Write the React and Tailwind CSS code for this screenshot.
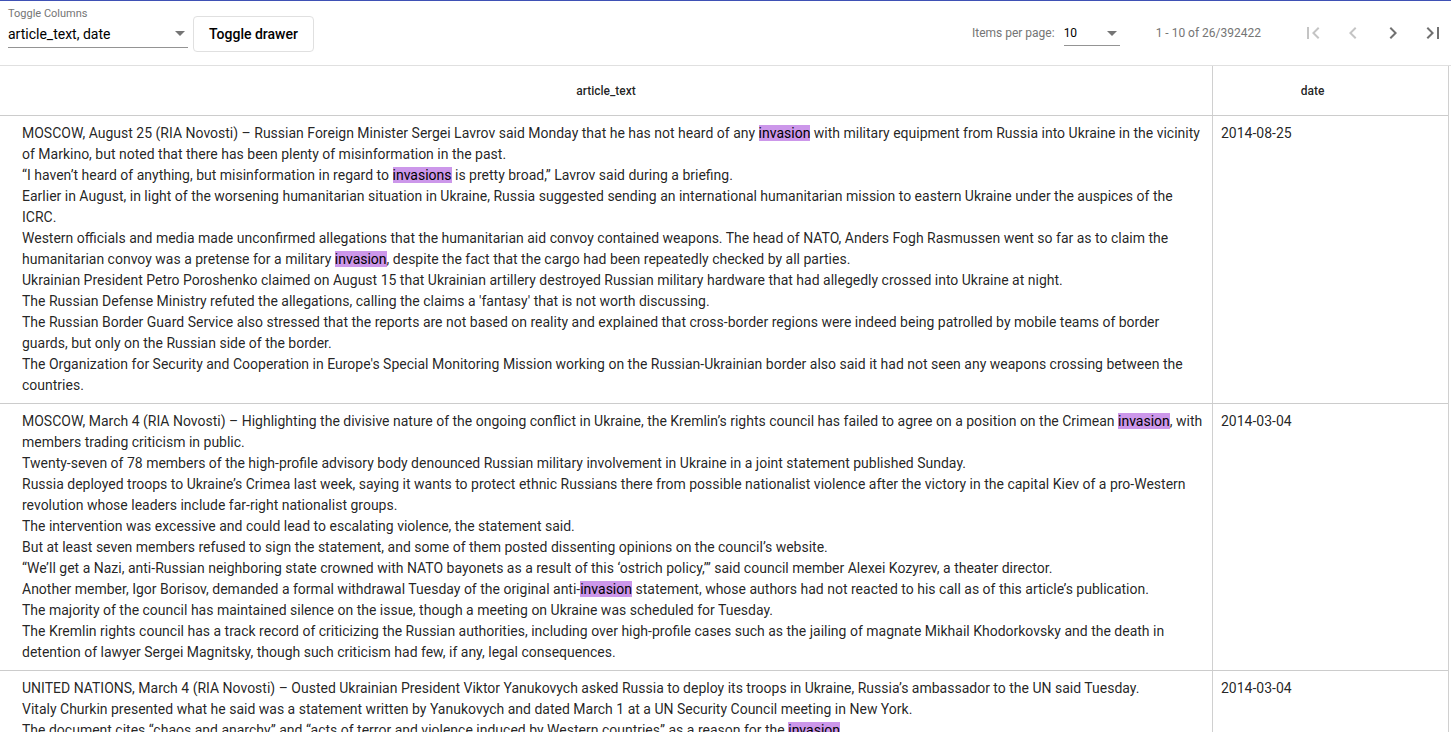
const rows = [
  {
    date: '2014-08-25',
    paras: [
      'MOSCOW, August 25 (RIA Novosti) – Russian Foreign Minister Sergei Lavrov said Monday that he has not heard of any [invasion] with military equipment from Russia into Ukraine in the vicinity of Markino, but noted that there has been plenty of misinformation in the past.',
      '“I haven’t heard of anything, but misinformation in regard to [invasions] is pretty broad,” Lavrov said during a briefing.',
      'Earlier in August, in light of the worsening humanitarian situation in Ukraine, Russia suggested sending an international humanitarian mission to eastern Ukraine under the auspices of the ICRC.',
      'Western officials and media made unconfirmed allegations that the humanitarian aid convoy contained weapons. The head of NATO, Anders Fogh Rasmussen went so far as to claim the humanitarian convoy was a pretense for a military [invasion], despite the fact that the cargo had been repeatedly checked by all parties.',
      'Ukrainian President Petro Poroshenko claimed on August 15 that Ukrainian artillery destroyed Russian military hardware that had allegedly crossed into Ukraine at night.',
      "The Russian Defense Ministry refuted the allegations, calling the claims a 'fantasy' that is not worth discussing.",
      'The Russian Border Guard Service also stressed that the reports are not based on reality and explained that cross-border regions were indeed being patrolled by mobile teams of border guards, but only on the Russian side of the border.',
      "The Organization for Security and Cooperation in Europe's Special Monitoring Mission working on the Russian-Ukrainian border also said it had not seen any weapons crossing between the countries.",
    ],
  },
  {
    date: '2014-03-04',
    paras: [
      'MOSCOW, March 4 (RIA Novosti) – Highlighting the divisive nature of the ongoing conflict in Ukraine, the Kremlin’s rights council has failed to agree on a position on the Crimean [invasion], with members trading criticism in public.',
      'Twenty-seven of 78 members of the high-profile advisory body denounced Russian military involvement in Ukraine in a joint statement published Sunday.',
      'Russia deployed troops to Ukraine’s Crimea last week, saying it wants to protect ethnic Russians there from possible nationalist violence after the victory in the capital Kiev of a pro-Western revolution whose leaders include far-right nationalist groups.',
      'The intervention was excessive and could lead to escalating violence, the statement said.',
      'But at least seven members refused to sign the statement, and some of them posted dissenting opinions on the council’s website.',
      '“We’ll get a Nazi, anti-Russian neighboring state crowned with NATO bayonets as a result of this ‘ostrich policy,’” said council member Alexei Kozyrev, a theater director.',
      'Another member, Igor Borisov, demanded a formal withdrawal Tuesday of the original anti-[invasion] statement, whose authors had not reacted to his call as of this article’s publication.',
      'The majority of the council has maintained silence on the issue, though a meeting on Ukraine was scheduled for Tuesday.',
      'The Kremlin rights council has a track record of criticizing the Russian authorities, including over high-profile cases such as the jailing of magnate Mikhail Khodorkovsky and the death in detention of lawyer Sergei Magnitsky, though such criticism had few, if any, legal consequences.',
    ],
  },
  {
    date: '2014-03-04',
    paras: [
      'UNITED NATIONS, March 4 (RIA Novosti) – Ousted Ukrainian President Viktor Yanukovych asked Russia to deploy its troops in Ukraine, Russia’s ambassador to the UN said Tuesday.',
      'Vitaly Churkin presented what he said was a statement written by Yanukovych and dated March 1 at a UN Security Council meeting in New York.',
      'The document cites “chaos and anarchy” and “acts of terror and violence induced by Western countries” as a reason for the [invasion].',
      'Churkin said the letter asked Russian President Vladimir Putin to use the armed forces to restore law and order in Ukraine.',
    ],
  },
];

// split "[word]" markers into highlighted spans
function Highlighted({ text }) {
  const parts = text.split(/(\[[^\]]+\])/);
  return parts.map((p, i) =>
    p.startsWith('[') ? (
      <mark key={i} className="bg-[#cc97ea] text-black">
        {p.slice(1, -1)}
      </mark>
    ) : (
      <span key={i}>{p}</span>
    )
  );
}

function Icon({ d, disabled }) {
  return (
    <button className="w-10 h-10 shrink-0 flex items-center justify-center">
      <svg
        viewBox="0 0 24 24"
        className={`w-6 h-6 ${disabled ? 'fill-[#c4c4c4]' : 'fill-[#717171]'}`}
      >
        <path d={d} />
      </svg>
    </button>
  );
}

export default function App() {
  return (
    <div className="h-screen flex flex-col overflow-hidden bg-white border-t border-[#3f51b5] font-['Roboto',sans-serif] text-[rgba(0,0,0,0.87)]">
      <div className="h-[65px] flex items-start border-b border-[#e0e0e0] shrink-0">
        <div className="ml-2 mt-[6px] w-[180px] flex flex-col">
          <span className="text-[11px] leading-[13px] text-[#757575]">Toggle Columns</span>
          <div className="h-[28px] flex items-center justify-between border-b border-[#949494]">
            <span className="text-[14px] leading-[20px] text-black">article_text, date</span>
            <span className="mr-[3px] w-0 h-0 border-x-[5px] border-x-transparent border-t-[5px] border-t-[#757575]" />
          </div>
        </div>
        <button className="ml-[5px] mt-[15px] w-[121px] h-[36px] rounded-[4px] border border-[#e0e0e0] text-[14px] font-medium text-black">
          Toggle drawer
        </button>

        <div className="ml-auto -mr-[2px] h-full flex items-center text-[12px] text-[#757575]">
          <span>Items per page:</span>
          <div className="ml-[9px] w-[56px] h-[24px] mt-[1px] flex items-center justify-between border-b border-[#949494]">
            <span className="text-[12px] text-black">10</span>
            <span className="mr-[3px] w-0 h-0 border-x-[5px] border-x-transparent border-t-[5px] border-t-[#757575]" />
          </div>
          <span className="ml-[36px] mr-[32px]">1 - 10 of 26/392422</span>
          <Icon disabled d="M18.41 16.59L13.82 12l4.59-4.59L17 6l-6 6 6 6zM6 6h2v12H6z" />
          <Icon disabled d="M15.41 7.41L14 6l-6 6 6 6 1.41-1.41L10.83 12z" />
          <Icon d="M10 6L8.59 7.41 13.17 12l-4.58 4.59L10 18l6-6z" />
          <Icon d="M5.59 7.41L10.18 12l-4.59 4.59L7 18l6-6-6-6zM16 6h2v12h-2z" />
        </div>
      </div>

      <div className="flex-1 overflow-hidden">
        <div className="w-[1449px] border-r border-[#d0d0d0]">
          <div className="flex h-[50px] border-b border-[#cccccc] text-[12px] font-medium text-[rgba(0,0,0,0.87)]">
            <div className="w-[1213px] flex items-center justify-center border-r border-[#d0d0d0]">article_text</div>
            <div className="flex-1 pr-[36px] flex items-center justify-center">date</div>
          </div>
          {rows.map((row, i) => (
            <div key={i} className="flex border-b border-[#cccccc] text-[14px] leading-[21px]">
              <div className="w-[1213px] pl-[22px] pr-[8px] py-[7px] border-r border-[#d0d0d0]">
                {row.paras.map((p, j) => (
                  <div key={j}>
                    <Highlighted text={p} />
                  </div>
                ))}
              </div>
              <div className="flex-1 pl-[8px] py-[7px]">{row.date}</div>
            </div>
          ))}
        </div>
      </div>
    </div>
  );
}
